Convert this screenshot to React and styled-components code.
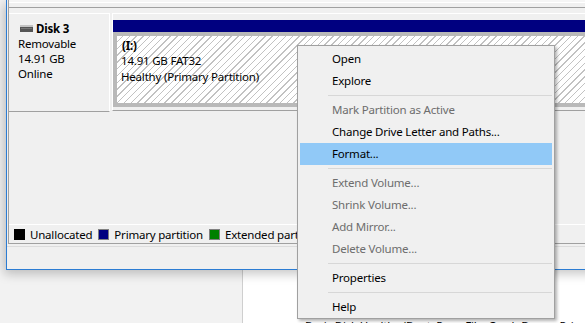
import React from "react";
import styled, { createGlobalStyle } from "styled-components";

const Global = createGlobalStyle`
  html, body { margin: 0; padding: 0; background: #f0f0f0; }
  #root { width: 585px; height: 323px; }
`;

const FONT = `"Noto Sans", "Open Sans", sans-serif`;

const Screen = styled.div`
  position: relative;
  width: 585px;
  height: 323px;
  overflow: hidden;
  background: #f0f0f0;
  font-family: ${FONT};
  font-size: 11.5px;
  letter-spacing: -0.2px;
  color: #000;
  display: flex;
  flex-direction: column;
`;

const Window = styled.div`
  position: relative;
  z-index: 1;
  flex: none;
  margin-left: 6px;
  width: 620px;
  height: 270px;
  box-sizing: border-box;
  border-left: 1px solid #2b7cd3;
  border-bottom: 1px solid #2b7cd3;
  background: #f0f0f0;
  box-shadow: -2px 4px 10px rgba(0, 0, 0, 0.22);
  display: flex;
  flex-direction: column;
`;

const Pane = styled.div`
  flex: 1;
  margin-left: 1px;
  border-left: 1px solid #a0a0a0;
  border-bottom: 1px solid #a0a0a0;
  display: flex;
  flex-direction: column;
`;

const PrevRowTail = styled.div`
  height: 7px;
  border-bottom: 1px solid #a0a0a0;
  background: linear-gradient(#f5f5f5 0 2px, #ffffff 2px 3px, #f0f0f0 3px);
`;

const DiskRow = styled.div`
  margin-top: 5px;
  height: 99px;
  display: flex;
  align-items: flex-start;
`;

const DiskInfo = styled.div`
  width: 101px;
  height: 99px;
  box-sizing: border-box;
  border-top: 1px solid #fff;
  border-right: 1px solid #fff;
  border-bottom: 1px solid #a0a0a0;
  padding: 7px 0 0 9px;
  line-height: 15px;
`;

const DiskTitle = styled.div`
  display: flex;
  align-items: center;
  gap: 3px;
  margin-left: 2px;
  font-weight: bold;
`;

const PartitionBox = styled.div`
  flex: 1;
  margin-left: 2px;
  box-sizing: border-box;
  height: 98px;
  border-top: 1px solid #fff;
  border-left: 1px solid #fff;
  border-bottom: 1px solid #a0a0a0;
  padding: 6px 0 3px 0;
  display: flex;
  flex-direction: column;
`;

const PrimaryBar = styled.div`
  height: 12px;
  background: #000080;
`;

const Hatched = styled.div`
  height: 67px;
  border: 4px solid #b9b9b9;
  border-right: none;
  background: repeating-linear-gradient(135deg, #fff 0 3.8px, #c2c2c2 3.8px 4.8px);
  padding: 2px 0 0 4px;
  line-height: 15.5px;
`;

const Bold = styled.div`
  font-weight: bold;
  margin-left: 1px;
`;

const Spacer = styled.div`
  flex: 1;
`;

const Legend = styled.div`
  height: 19px;
  box-sizing: border-box;
  border-top: 1px solid #fff;
  padding-left: 5px;
  display: flex;
  align-items: center;
  white-space: nowrap;
`;

const LegendItem = styled.div`
  display: flex;
  align-items: center;
  gap: 5px;
  margin-right: 6px;
`;

const Swatch = styled.span`
  width: 11px;
  height: 11px;
  box-sizing: border-box;
  border: 1px solid ${(p) => p.$edge};
  background: ${(p) => p.$color};
`;

const StatusBar = styled.div`
  height: 25px;
  background: linear-gradient(#f0f0f0 0 2px, #dcdcdc 2px 3px, #f0f0f0 3px);
`;

const Behind = styled.div`
  flex: 1;
  display: flex;
`;

const BehindLeft = styled.div`
  width: 242px;
  background: #f2f2f2;
  border-right: 1px solid #cfcfcf;
`;

const BehindRight = styled.div`
  flex: 1;
  background: #fff;
  padding: 48px 0 0 62px;
  line-height: 16px;
  white-space: nowrap;
  overflow: hidden;
`;

const Menu = styled.div`
  position: absolute;
  z-index: 2;
  left: 297px;
  top: 45px;
  width: 258px;
  box-sizing: border-box;
  border: 1px solid #a0a0a0;
  background: #f0f0f0;
  padding: 2px 2px 0;
  box-shadow: 2px 2px 3px rgba(0, 0, 0, 0.3);
`;

const MenuItem = styled.div`
  height: 22px;
  line-height: 22px;
  padding-left: 32px;
  white-space: nowrap;
  color: ${(p) => (p.$disabled ? "#6d6d6d" : "#000")};
  background: ${(p) => (p.$active ? "#91c9f7" : "transparent")};
`;

const Separator = styled.div`
  height: 1px;
  margin: 3px 0 3px 28px;
  background: #d7d7d7;
`;

const DiskIcon = () => (
  <svg width="13" height="8" viewBox="0 0 13 8">
    <rect x="0" y="0" width="13" height="2" fill="#c4c4c4" />
    <rect x="0" y="2" width="13" height="5" fill="#555" />
    <rect x="1" y="3" width="11" height="1" fill="#777" />
  </svg>
);

const menu = [
  { label: "Open" },
  { label: "Explore" },
  { sep: true },
  { label: "Mark Partition as Active", disabled: true },
  { label: "Change Drive Letter and Paths..." },
  { label: "Format...", active: true },
  { sep: true },
  { label: "Extend Volume...", disabled: true },
  { label: "Shrink Volume...", disabled: true },
  { label: "Add Mirror...", disabled: true },
  { label: "Delete Volume...", disabled: true },
  { sep: true },
  { label: "Properties" },
  { sep: true },
  { label: "Help" },
];

const legend = [
  { label: "Unallocated", color: "#000", edge: "#000" },
  { label: "Primary partition", color: "#000080", edge: "#808080" },
  { label: "Extended partition", color: "#008000", edge: "#808080" },
];

export default function App() {
  return (
    <>
      <Global />
      <Screen>
        <Window>
          <Pane>
            <PrevRowTail />
            <DiskRow>
              <DiskInfo>
                <DiskTitle>
                  <DiskIcon />
                  Disk 3
                </DiskTitle>
                <div>Removable</div>
                <div>14.91 GB</div>
                <div>Online</div>
              </DiskInfo>
              <PartitionBox>
                <PrimaryBar />
                <Hatched>
                  <Bold>(I:)</Bold>
                  <div>14.91 GB FAT32</div>
                  <div>Healthy (Primary Partition)</div>
                </Hatched>
              </PartitionBox>
            </DiskRow>
            <Spacer />
            <Legend>
              {legend.map((l) => (
                <LegendItem key={l.label}>
                  <Swatch $color={l.color} $edge={l.edge} />
                  {l.label}
                </LegendItem>
              ))}
            </Legend>
          </Pane>
          <StatusBar />
        </Window>
        <Behind>
          <BehindLeft />
          <BehindRight>Basic Disk   Healthy (Boot, Page File, Crash Dump, Primary Partition)</BehindRight>
        </Behind>
        <Menu>
          {menu.map((m, i) =>
            m.sep ? (
              <Separator key={i} />
            ) : (
              <MenuItem key={i} $disabled={m.disabled} $active={m.active}>
                {m.label}
              </MenuItem>
            )
          )}
        </Menu>
      </Screen>
    </>
  );
}
